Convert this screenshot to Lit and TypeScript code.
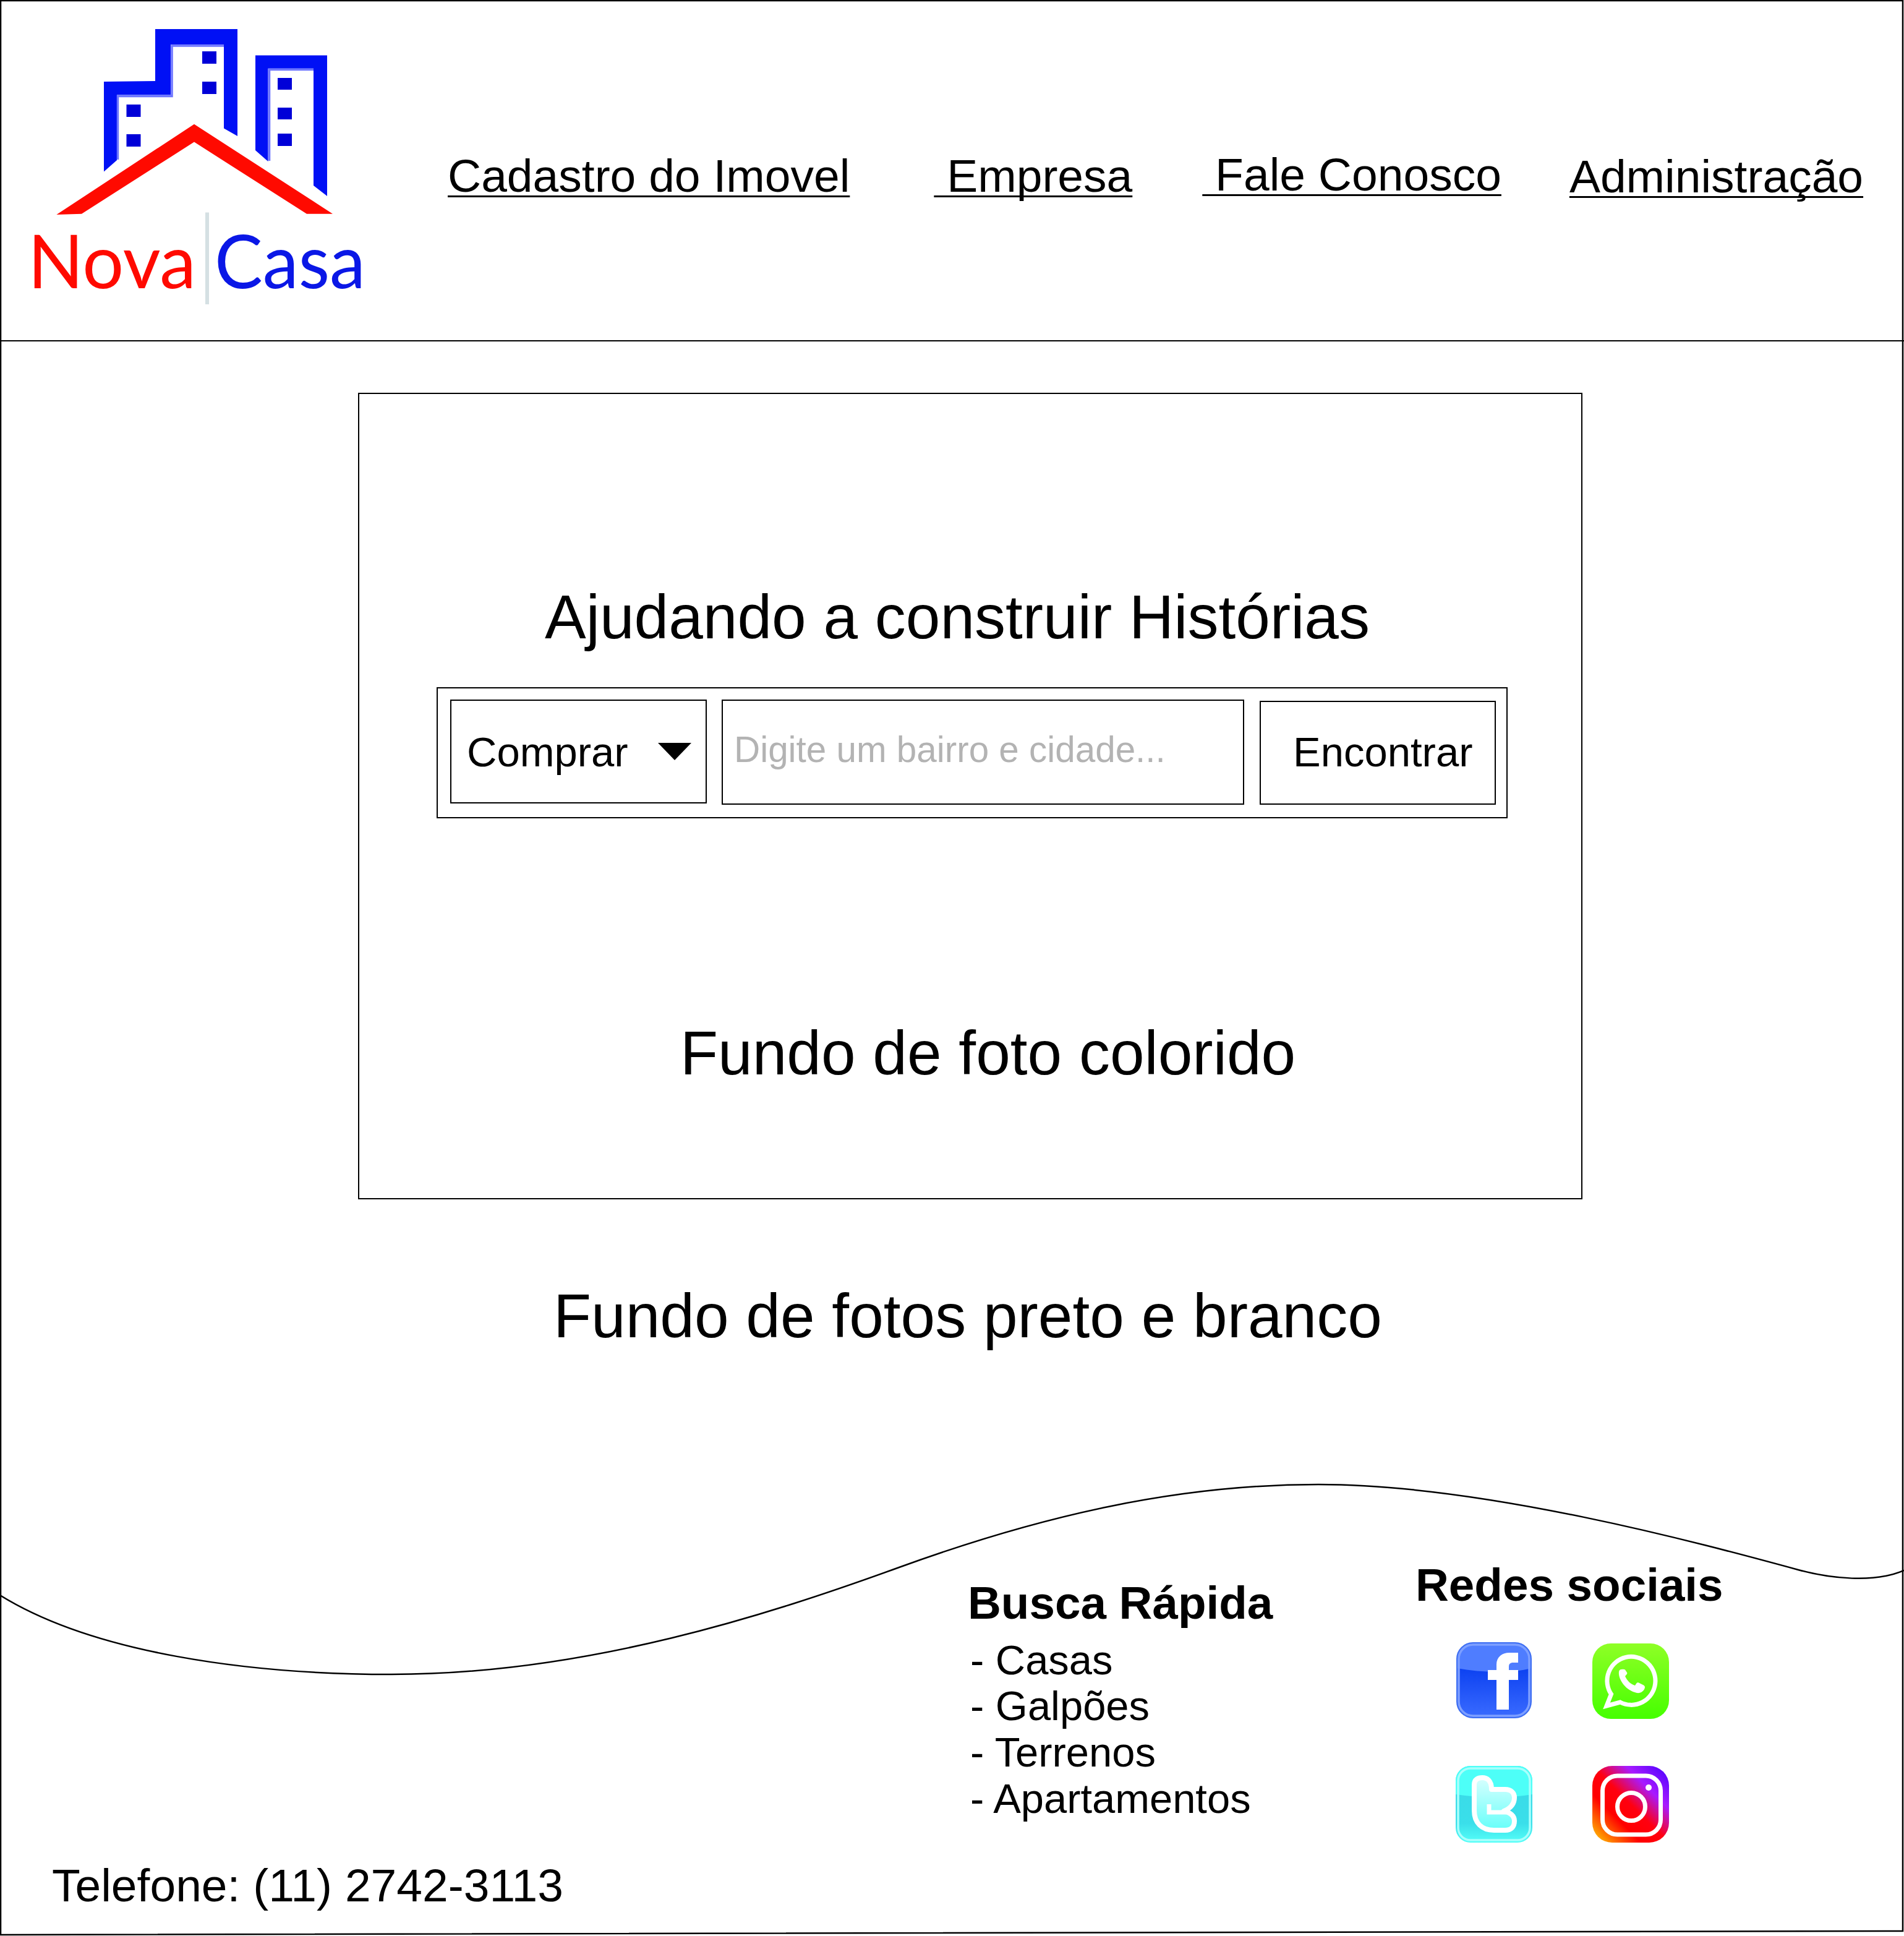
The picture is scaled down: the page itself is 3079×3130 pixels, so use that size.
import { LitElement, css, html, svg } from 'lit';
import { customElement } from 'lit/decorators.js';

// footer wave, in page coordinates
const WAVE =
  'M0 2579 C150 2672 400 2707 633 2707 C950 2707 1250 2608 1454 2534 ' +
  'C1680 2452 1900 2400 2132 2400 C2400 2400 2750 2495 2908 2538 C2960 2552 3030 2560 3079 2539';

const logo = svg`
  <svg class="logo" viewBox="0 0 620 551" width="620" height="551" aria-label="Nova Casa">
    <path fill="#0010f5" d="M168 132 L251 131 V47 H384 V220 L362 207.5 V72 H276 V153.5 H189 V259 L168 277.5 Z"/>
    <path fill="none" stroke="#6e76ff" stroke-width="3.5" d="M362 74 H278 V155.5 H190.5 V258"/>
    <path fill="#0010f5" d="M413 89.6 H529 V317 L507 300 V110.7 H433.5 V261 L413 243 Z"/>
    <path fill="none" stroke="#6e76ff" stroke-width="3.5" d="M507 112.5 H435.5 V260"/>
    <g fill="#0000d8">
      <rect x="327" y="83" width="23" height="20"/>
      <rect x="327" y="132" width="23" height="20"/>
      <rect x="204.5" y="169" width="23" height="20"/>
      <rect x="204.5" y="217" width="23" height="20"/>
      <rect x="449" y="126" width="23" height="19"/>
      <rect x="449" y="174" width="23" height="19"/>
      <rect x="449" y="216" width="23" height="20"/>
    </g>
    <path fill="#ff0a00" d="M314 200.7 L538 345.7 H496 L314 229.6 L132 345.7 L91.4 347 Z"/>
    <rect x="332" y="343.5" width="6" height="148.5" fill="#d5e0e3"/>
    <text class="logo-word" x="45" y="466" fill="#ff0a00" textLength="272" lengthAdjust="spacingAndGlyphs">Nova</text>
    <text class="logo-word" x="347" y="466" fill="#0a17e6" textLength="244" lengthAdjust="spacingAndGlyphs">Casa</text>
  </svg>
`;

const facebook = svg`
  <svg viewBox="0 0 124 124" width="124" height="124">
    <defs>
      <linearGradient id="fb" x1="0" y1="0" x2="0" y2="1">
        <stop offset="0.3" stop-color="#0a3ff0"/>
        <stop offset="1" stop-color="#3a6bff"/>
      </linearGradient>
    </defs>
    <rect x="2" y="1" width="120" height="121" rx="26" fill="url(#fb)"/>
    <path fill="#4f7dff" d="M2 42 V27 A26 26 0 0 1 28 1 H96 A26 26 0 0 1 122 27 V42 C90 51 40 49 2 42 Z"/>
    <rect x="5" y="4" width="114" height="115" rx="23" fill="none" stroke="#7d9fff" stroke-width="3.5"/>
    <rect x="2" y="1" width="120" height="121" rx="26" fill="none" stroke="#3f6ff2" stroke-width="2"/>
    <path fill="#fff" d="M66 109 V61 H52 V45 H66 V36 C66 24 75 17 87 17 H101 V33 H93 C88 33 86 35 86 40 V45 H101 V61 H86 V109 Z"/>
  </svg>
`;

const whatsapp = svg`
  <svg viewBox="0 0 124 124" width="124" height="124">
    <defs>
      <linearGradient id="wa" x1="0" y1="0" x2="0" y2="1">
        <stop offset="0" stop-color="#8fff26"/>
        <stop offset="1" stop-color="#45ff00"/>
      </linearGradient>
    </defs>
    <g transform="translate(0 2)">
      <rect x="0" y="0" width="124" height="122" rx="30" fill="url(#wa)"/>
      <path fill="none" stroke="#fff" stroke-width="7" d="M30.5 82 L23 101 L45 95 A39 39 0 1 0 30.5 82 Z"/>
      <path fill="#fff" d="M47 42 C44 42 42.5 44 43 50 C44 60 54 76 72 80 C78 81 84 77 85 71 C85 69 84 68 82 67 L75 63.5 C73 63 72 63.5 71 65 L69 68 C62 66 56 60 53 53 L55.5 50 C56.5 49 56.5 48 56 47 L53 42.5 C52 41.5 50 41.5 47 42 Z"/>
    </g>
  </svg>
`;

const twitter = svg`
  <svg viewBox="0 0 124 124" width="124" height="124">
    <defs>
      <linearGradient id="tw" x1="0" y1="0" x2="0" y2="1">
        <stop offset="0.35" stop-color="#3adbe8"/>
        <stop offset="0.75" stop-color="#3adfea"/>
        <stop offset="1" stop-color="#55fff8"/>
      </linearGradient>
      <linearGradient id="twb" x1="0" y1="0" x2="0" y2="1">
        <stop offset="0" stop-color="#d8fffe"/>
        <stop offset="1" stop-color="#66fffa"/>
      </linearGradient>
    </defs>
    <rect x="0" y="0" width="124" height="124" rx="24" fill="url(#tw)"/>
    <path fill="#4dfff8" d="M0 46 V24 A24 24 0 0 1 24 0 H100 A24 24 0 0 1 124 24 V46 C90 52 40 52 0 46 Z"/>
    <rect x="4" y="4" width="116" height="116" rx="20" fill="none" stroke="#a8fffc" stroke-width="3.5"/>
    <path fill="url(#twb)" stroke="#fff" stroke-width="8" stroke-linejoin="round" d="M30 30 C30 22 36 19 43 19 C50 19 58 23 58 38 H80 C90 38 95 44 95 51 C95 60 90 68 78 73 C90 76 95 82 95 89 C95 98 90 104 80 104 H62 C42 104 30 92 30 72 Z"/>
    <path fill="none" stroke="#fff" stroke-width="7" d="M54 62 V75 H82"/>
  </svg>
`;

const instagram = svg`
  <svg viewBox="0 0 124 124" width="124" height="124">
    <defs>
      <linearGradient id="ig" x1="0" y1="1" x2="1" y2="0">
        <stop offset="0" stop-color="#ffd600"/>
        <stop offset="0.16" stop-color="#ff6a00"/>
        <stop offset="0.32" stop-color="#ff0000"/>
        <stop offset="0.5" stop-color="#ff0010"/>
        <stop offset="0.72" stop-color="#a81aff"/>
        <stop offset="1" stop-color="#4300ff"/>
      </linearGradient>
    </defs>
    <rect x="0" y="0" width="124" height="124" rx="32" fill="url(#ig)"/>
    <rect x="16.5" y="16" width="94" height="95" rx="24" fill="none" stroke="#fff" stroke-width="7"/>
    <circle cx="63" cy="66" r="22.5" fill="none" stroke="#fff" stroke-width="7"/>
    <circle cx="91" cy="35" r="5" fill="#fff"/>
  </svg>
`;

@customElement('app-root')
export class AppRoot extends LitElement {
  static styles = css`
    :host {
      display: block;
      position: relative;
      width: 3079px;
      height: 3130px;
      overflow: hidden;
      background: #fff;
      color: #000;
      font-family: "Liberation Sans", Arial, sans-serif;
    }
    .outline {
      position: absolute;
      inset: 0;
      pointer-events: none;
    }
    header {
      display: flex;
      box-sizing: border-box;
      height: 552px;
      border-bottom: 2px solid #000;
    }
    .logo {
      flex: none;
      display: block;
    }
    .logo-word {
      font-family: Lato, sans-serif;
      font-size: 120px;
    }
    nav {
      display: flex;
      align-items: flex-start;
      padding: 247px 0 0 104px;
      font-size: 75px;
      line-height: 1;
    }
    nav a {
      color: inherit;
      white-space: pre;
      text-decoration: underline;
      text-decoration-thickness: 3px;
      text-underline-offset: 6px;
      text-decoration-skip-ink: none;
    }
    .to-empresa { margin-left: 136px; }
    .to-fale { margin-left: 113px; margin-top: -2px; }
    .to-admin { margin-left: 110px; margin-top: 1px; }

    .hero {
      box-sizing: border-box;
      width: 1980px;
      height: 1304px;
      margin: 83px 0 0 579px;
      padding-top: 310px;
      border: 2px solid #000;
    }
    .hero-title,
    .hero-note,
    .bw-note {
      margin: 0;
      font-size: 100px;
      font-weight: 400;
      line-height: 1;
      white-space: nowrap;
    }
    .hero-title { margin-left: 300px; }
    .hero-note { margin: 329px 0 0 519px; }
    .bw-note { margin: 138px 0 0 895px; }

    .search {
      box-sizing: border-box;
      display: flex;
      align-items: flex-start;
      width: 1732px;
      height: 212px;
      margin: 64px 0 0 125px;
      padding: 18px 0 0 20px;
      border: 2px solid #000;
    }
    .search > div {
      box-sizing: border-box;
      flex: none;
      border: 2px solid #000;
    }
    .select {
      display: flex;
      align-items: center;
      width: 415px;
      height: 168px;
      padding: 0 23px 0 25px;
      font-size: 67px;
      line-height: 1;
    }
    .caret {
      margin-left: auto;
      width: 0;
      height: 0;
      border-style: solid;
      border-width: 28px 27px 0;
      border-color: #000 transparent transparent;
    }
    .input {
      width: 845px;
      height: 170px;
      margin-left: 24px;
      padding: 50px 0 0 18px;
      color: #b3b3b3;
      font-size: 58.4px;
      line-height: 1;
      white-space: nowrap;
    }
    .find {
      display: flex;
      align-items: center;
      width: 382px;
      height: 168px;
      margin: 2px 0 0 25px;
      padding: 0 0 4px 52px;
      font-size: 67px;
      line-height: 1;
    }

    footer {
      display: flex;
      height: 953px;
    }
    .phone {
      flex: none;
      align-self: flex-end;
      box-sizing: border-box;
      width: 1565px;
      padding: 0 0 44px 84px;
      font-size: 75px;
      line-height: 1;
      white-space: nowrap;
    }
    .quick {
      flex: none;
      width: 724px;
      padding-top: 377px;
    }
    h2 {
      margin: 0;
      font-size: 74.6px;
      font-weight: 700;
      line-height: 1;
      white-space: nowrap;
    }
    .quick ul {
      margin: 18px 0 0 4px;
      padding: 0;
      list-style: none;
      font-size: 66.9px;
      line-height: 74.7px;
    }
    .social {
      flex: none;
      padding-top: 348px;
    }
    .icons {
      display: grid;
      grid-template-columns: 124px 124px;
      grid-auto-rows: 124px;
      column-gap: 97px;
      row-gap: 76px;
      margin: 55px 0 0 65px;
    }
    .icons svg {
      display: block;
    }
  `;

  render() {
    return html`
      <header>
        ${logo}
        <nav>
          <a>Cadastro do Imovel</a>
          <a class="to-empresa">&nbsp;Empresa</a>
          <a class="to-fale">&nbsp;Fale Conosco</a>
          <a class="to-admin">Administração</a>
        </nav>
      </header>

      <section class="hero">
        <h1 class="hero-title">Ajudando a construir Histórias</h1>
        <div class="search">
          <div class="select">Comprar<span class="caret"></span></div>
          <div class="input">Digite um bairro e cidade...</div>
          <div class="find">Encontrar</div>
        </div>
        <p class="hero-note">Fundo de foto colorido</p>
      </section>

      <p class="bw-note">Fundo de fotos preto e branco</p>

      <footer>
        <div class="phone">Telefone: (11) 2742-3113</div>
        <div class="quick">
          <h2>Busca Rápida</h2>
          <ul>
            <li>- Casas</li>
            <li>- Galpões</li>
            <li>- Terrenos</li>
            <li>- Apartamentos</li>
          </ul>
        </div>
        <div class="social">
          <h2>Redes sociais</h2>
          <div class="icons">${facebook}${whatsapp}${twitter}${instagram}</div>
        </div>
      </footer>

      <svg class="outline" viewBox="0 0 3079 3130" width="3079" height="3130" fill="none" stroke="#000">
        <path stroke-width="2.5" d="M1 3128 V1 H3077 V3122 Z"/>
        <path stroke-width="2.5" d=${WAVE}/>
      </svg>
    `;
  }
}
